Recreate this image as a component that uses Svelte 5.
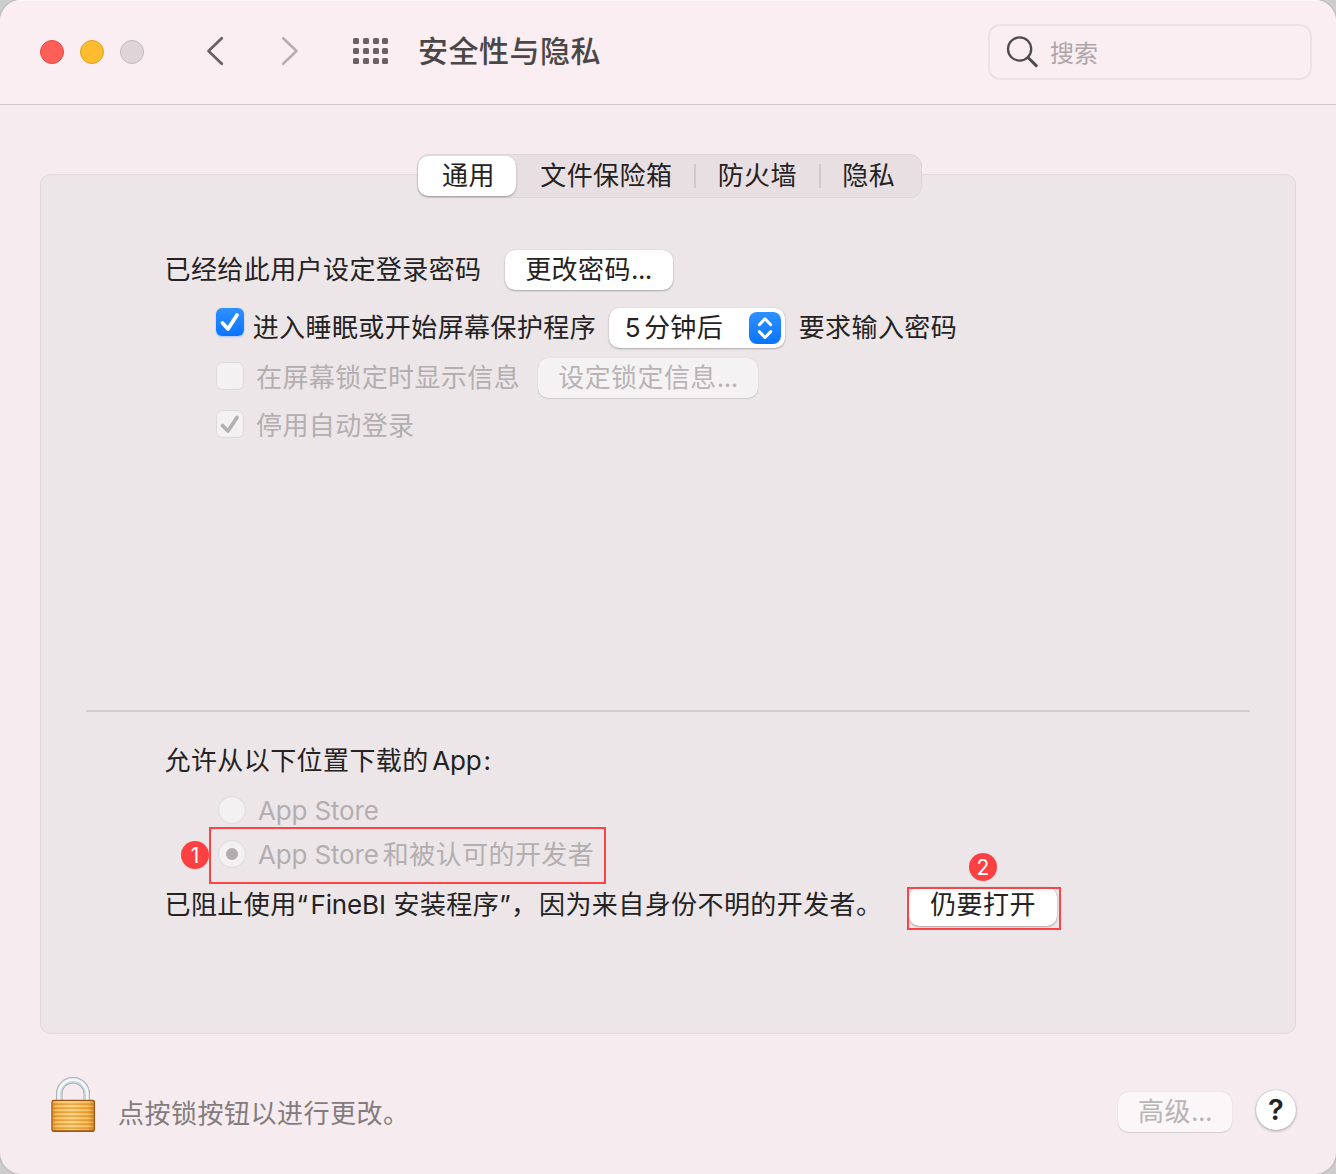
<script>
    const tabs = ["通用", "文件保险箱", "防火墙", "隐私"];
    const dots = [0, 1, 2, 3, 4, 5, 6, 7, 8, 9, 10, 11];
    let activeTab = $state("通用");
    let source = $state("identified");
</script>

<div class="window">
    <header class="toolbar">
        <div class="lights">
            <span class="light close"></span>
            <span class="light minimize"></span>
            <span class="light disabled"></span>
        </div>
        <svg class="back" width="20" height="30" viewBox="0 0 20 30" fill="none" stroke="#6b6064" stroke-width="2.7" stroke-linecap="round" stroke-linejoin="round"><path d="M16.8 2.3 3.5 15l13.3 12.7" /></svg>
        <svg class="forward" width="20" height="30" viewBox="0 0 20 30" fill="none" stroke="#b9aeb2" stroke-width="2.7" stroke-linecap="round" stroke-linejoin="round"><path d="M3.2 2.3 16.5 15 3.2 27.7" /></svg>
        <div class="grid">
            {#each dots as dot (dot)}
                <span></span>
            {/each}
        </div>
        <h1>安全性与隐私</h1>
        <div class="search">
            <svg width="34" height="34" viewBox="0 0 34 34" fill="none" stroke="#4f4b4d" stroke-linecap="round"><circle cx="13.6" cy="14" r="11.6" stroke-width="2.3" /><path d="M22 22.5 30.2 30.6" stroke-width="3" /></svg>
            <span>搜索</span>
        </div>
    </header>

    <main>
        <nav class="tabs">
            {#each tabs as tab}
                <button class="tab" class:active={activeTab === tab} onclick={() => activeTab = tab}><span>{tab}</span></button>
            {/each}
        </nav>

        <section class="panel">
            <div class="row password">
                <span class="text">已经给此用户设定登录密码</span>
                <button class="btn change"><span>更改密码<span class="dots">...</span></span></button>
            </div>
            <div class="row sleep">
                <span class="check on">
                    <svg width="28" height="28" viewBox="0 0 28 28" fill="none" stroke="#fff" stroke-width="3.8" stroke-linecap="round" stroke-linejoin="round"><path d="M6.5 15 12 21 21 7" /></svg>
                </span>
                <span class="text">进入睡眠或开始屏幕保护程序</span>
                <button class="btn select">
                    <span><span class="num">5</span>分钟后</span>
                    <span class="stepper">
                        <svg width="32" height="32" viewBox="0 0 32 32" fill="none" stroke="#fff" stroke-width="3" stroke-linecap="round" stroke-linejoin="round"><path d="m10.3 12.7 5.7-5.9 5.7 5.9M10.3 19.6l5.7 5.9 5.7-5.9" /></svg>
                    </span>
                </button>
                <span class="text">要求输入密码</span>
            </div>
            <div class="row message dim">
                <span class="check"></span>
                <span class="text">在屏幕锁定时显示信息</span>
                <button class="btn lock-message" disabled><span>设定锁定信息<span class="dots">...</span></span></button>
            </div>
            <div class="row auto dim">
                <span class="check">
                    <svg width="28" height="28" viewBox="0 0 28 28" fill="none" stroke="#b3b0b1" stroke-width="3.8" stroke-linecap="round" stroke-linejoin="round"><path d="M6.5 15.5 12 21 21 7.5" /></svg>
                </span>
                <span class="text">停用自动登录</span>
            </div>

            <hr />

            <div class="row allow">
                <span class="text">允许从以下位置下载的<span class="latin app">App</span><span class="colon">:</span></span>
            </div>
            <div class="row store dim">
                <span class="radio" class:selected={source === "store"}></span>
                <span class="text latin">App Store</span>
            </div>
            <div class="row identified dim">
                <span class="radio" class:selected={source === "identified"}></span>
                <span class="text"><span class="latin">App Store</span><span class="after-latin">和被认可的开发者</span></span>
                <span class="mark mark-source"></span>
                <span class="step step-one">1</span>
            </div>
            <div class="row blocked">
                <span class="text">已阻止使用<span class="quote">“</span><span class="latin">FineBI</span> 安装程序”，<span class="reason">因为来自身份不明的开发者。</span></span>
                <div class="open">
                    <button class="btn"><span>仍要打开</span></button>
                    <span class="mark mark-open"></span>
                    <span class="step step-two">2</span>
                </div>
            </div>
        </section>
    </main>

    <footer>
        <svg class="lock" width="46" height="58" viewBox="0 0 46 58">
            <defs>
                <linearGradient id="brass" x1="0" x2="1" y1="0" y2="0">
                    <stop offset="0" stop-color="#d98a20" />
                    <stop offset=".12" stop-color="#fbb440" />
                    <stop offset=".45" stop-color="#ffd27a" />
                    <stop offset=".85" stop-color="#f8ae3b" />
                    <stop offset="1" stop-color="#c97517" />
                </linearGradient>
            </defs>
            <path d="M9.2 25V18a13.8 13.8 0 0 1 27.6 0v7" fill="none" stroke="#96a1a6" stroke-width="6.4" />
            <path d="M9.2 25V18a13.8 13.8 0 0 1 27.6 0v7" fill="none" stroke="#cdd7dc" stroke-width="5.2" />
            <path d="M8.8 25V18a14.2 14.2 0 0 1 28.4 0v7" fill="none" stroke="#f4f8fa" stroke-width="2.6" />
            <rect x="1.9" y="24.4" width="42.6" height="31" rx="1.8" fill="url(#brass)" stroke="#9d5414" stroke-width="1.1" />
            <path d="M2.5 28.2h41M2.5 32.2h41M2.5 36.2h41M2.5 40.2h41M2.5 44.2h41M2.5 48.2h41M2.5 52.2h41" stroke="#d08628" stroke-width="1.3" opacity=".7" />
            <path d="M3 26.3h40M3 30.3h40M3 34.3h40M3 38.3h40M3 42.3h40M3 46.3h40M3 50.3h40" stroke="#ffdf98" stroke-width="1" opacity=".5" />
            <path d="M2.4 54.8h41.6" stroke="#a35c18" stroke-width="1.2" />
        </svg>
        <span class="text hint">点按锁按钮以进行更改。</span>
        <button class="btn advanced" disabled><span>高级<span class="dots">...</span></span></button>
        <button class="help"><span>?</span></button>
    </footer>
</div>

<style>
    :global(body) {
        background: #cfcccd;
    }

    .window {
        box-sizing: border-box;
        width: 1336px;
        height: 1174px;
        display: flex;
        flex-direction: column;
        border-radius: 21px;
        background: #f6ebef;
        box-shadow: 0 0 2px #888;
        overflow: hidden;
        font-family: Inter, "Noto Sans CJK SC", sans-serif;
        font-size: 26px;
        letter-spacing: 0.42px;
        line-height: 40px;
        color: #242223;
    }

    button {
        font: inherit;
        letter-spacing: inherit;
        color: inherit;
        border: none;
        padding: 0;
        white-space: nowrap;
    }

    .toolbar {
        box-sizing: border-box;
        height: 105px;
        display: flex;
        align-items: center;
        padding: 0 24px 2px 40px;
        background: #faeef2;
        border-top: 1px solid #fdf8fa;
        border-bottom: 1px solid #cfc5c8;
    }

    .lights {
        display: flex;
        gap: 16px;
    }

    .light {
        box-sizing: border-box;
        width: 24px;
        height: 24px;
        border-radius: 50%;
        border: 1px solid;
    }

    .close {
        background: #ff5f57;
        border-color: #e24640;
    }

    .minimize {
        background: #febc2e;
        border-color: #dfa023;
    }

    .disabled {
        background: #dfd5d9;
        border-color: #c4babe;
    }

    .back {
        margin: 0 0 2px 61px;
    }

    .forward {
        margin: 0 0 2px 55px;
    }

    .grid {
        display: grid;
        grid-template-columns: repeat(4, 6px);
        gap: 3.8px;
        margin: 0 0 1px 53px;
    }

    .grid span {
        width: 6px;
        height: 6px;
        border-radius: 1.5px;
        background: #6b6064;
    }

    h1 {
        margin: 0 0 2px 29.6px;
        font-size: 30px;
        font-weight: 500;
        letter-spacing: 0.5px;
        color: #4b4748;
    }

    .search {
        box-sizing: border-box;
        width: 324px;
        height: 56px;
        margin-left: auto;
        display: flex;
        align-items: center;
        padding-left: 16px;
        border: 2px solid #ece1e5;
        border-radius: 12px;
        font-size: 24px;
        letter-spacing: 0;
        color: #aea5a8;
    }

    .search span {
        margin: 4px 0 0 10px;
    }

    main {
        padding: 49px 40px 0;
    }

    .tabs {
        position: relative;
        box-sizing: border-box;
        width: 505px;
        height: 44px;
        margin: 0 auto -24px 377px;
        display: flex;
        align-items: center;
        border: 1px solid #ddd5d8;
        border-radius: 12px;
        background: #e8dfe2;
    }

    .tab {
        height: 40px;
        padding: 0 22.7px;
        border-radius: 10px;
        background: none;
        position: relative;
    }

    .tab span {
        display: block;
        margin-top: -1px;
    }

    .tab.active {
        padding: 0 21.5px 0 24px;
        margin-right: 1.2px;
        background: #fff;
        box-shadow: 0 1px 2px rgba(0, 0, 0, 0.35);
    }

    .tab:not(.active) + .tab::before {
        content: "";
        position: absolute;
        left: -1px;
        top: 8px;
        width: 2px;
        height: 24px;
        background: #d1c8cb;
    }

    .panel {
        box-sizing: border-box;
        height: 860px;
        padding-top: 75px;
        border: 1px solid #e0d9dc;
        border-radius: 10px;
        background: #ece6e8;
    }

    .row {
        height: 40px;
        display: flex;
        align-items: center;
        position: relative;
        white-space: nowrap;
    }

    .row .text {
        padding-bottom: 1px;
    }

    .dim {
        color: #b3aeb0;
    }

    .btn {
        height: 40px;
        display: flex;
        align-items: center;
        justify-content: center;
        border-radius: 10px;
        background: #fff;
        box-shadow: 0 0 1px rgba(0, 0, 0, 0.25), 0 1px 2px rgba(0, 0, 0, 0.25);
    }

    .btn > span:first-child {
        padding-bottom: 1px;
    }

    .btn:disabled {
        color: #b8b4b6;
        background: #f5f2f3;
        box-shadow: 0 0 1px rgba(0, 0, 0, 0.2), 0 1px 1px rgba(0, 0, 0, 0.1);
    }

    .dots {
        letter-spacing: -0.5px;
    }

    .password,
    .allow,
    .blocked {
        padding-left: 123.5px;
    }

    .change {
        width: 168px;
        margin-left: 23px;
    }

    .sleep {
        margin-top: 18px;
        padding-left: 175px;
    }

    .message {
        margin-top: 10px;
        padding-left: 175px;
    }

    .auto {
        margin-top: 8px;
        padding-left: 175px;
    }

    .check {
        box-sizing: border-box;
        width: 28px;
        height: 28px;
        margin-right: 12px;
        border-radius: 6px;
        background: #f4f1f2;
        box-shadow: inset 0 0 1px 1px #ddd8da;
    }

    .check svg {
        display: block;
    }

    .check.on {
        margin: 0 8.7px 12px 0;
        background: linear-gradient(#2f90ff, #0a74ff);
        box-shadow: 0 1px 2px rgba(10, 110, 255, 0.3);
    }

    .message .check,
    .auto .check {
        margin-bottom: 4px;
    }

    .select {
        width: 176px;
        margin: 0 13.5px 0 13px;
        padding: 0 4px 0 15.5px;
        justify-content: space-between;
    }

    .num {
        margin-right: 3px;
    }

    .stepper {
        width: 32px;
        height: 32px;
        border-radius: 8px;
        background: linear-gradient(#2f90ff, #0a74ff);
    }

    .stepper svg {
        display: block;
    }

    .lock-message {
        width: 220px;
        margin-left: 17.8px;
    }

    hr {
        height: 2px;
        margin: 264px 45px 29px;
        border: none;
        background: #d3cdcf;
    }

    .latin {
        letter-spacing: -0.15px;
    }

    .app {
        margin-left: 3.5px;
    }

    .colon {
        margin-left: 2px;
    }

    .allow .text,
    .store .text {
        padding-bottom: 0;
    }

    .store {
        margin-top: 10px;
        padding-left: 177px;
    }

    .identified {
        margin-top: 4px;
        padding-left: 177px;
    }

    .identified .text {
        padding-bottom: 0;
    }

    .radio {
        box-sizing: border-box;
        width: 28px;
        height: 28px;
        margin: 0 12px 2px 0;
        display: flex;
        align-items: center;
        justify-content: center;
        border-radius: 50%;
        background: #f4f1f2;
        box-shadow: inset 0 0 1px 1px #ddd8da;
    }

    .radio.selected::after {
        content: "";
        width: 12px;
        height: 12px;
        border-radius: 50%;
        background: #b1adaf;
    }

    .after-latin {
        margin-left: 4px;
    }

    .blocked {
        margin-top: 12px;
        align-items: flex-start;
    }

    .blocked .text {
        width: 744.5px;
        margin-top: -2px;
        padding-bottom: 0;
    }

    .blocked .btn span {
        padding-bottom: 3px;
    }

    .quote {
        margin-right: 2px;
    }

    .reason {
        margin-left: 1.5px;
    }

    .open {
        position: relative;
    }

    .open .btn {
        width: 148px;
        height: 39px;
    }

    .mark {
        position: absolute;
        box-sizing: border-box;
        border: 2px solid #fc4345;
    }

    .mark-source {
        left: 168px;
        top: -8px;
        width: 397px;
        height: 57px;
    }

    .mark-open {
        left: -2px;
        top: 0;
        width: 154px;
        height: 43px;
    }

    .step {
        position: absolute;
        width: 28px;
        height: 28px;
        border-radius: 50%;
        background: #fd4042;
        color: #fff;
        font-size: 21px;
        letter-spacing: 0;
        line-height: 29px;
        text-align: center;
    }

    .step-one {
        left: 140px;
        top: 6px;
    }

    .step-two {
        left: 60px;
        top: -34px;
    }

    footer {
        display: flex;
        align-items: center;
        height: 60px;
        margin-top: 41px;
        padding: 0 40px 0 50px;
    }

    .hint {
        margin: 17px 0 0 22px;
        letter-spacing: 0.5px;
        color: #827c7e;
    }

    .advanced {
        width: 114px;
        margin: 14px 0 0 auto;
    }

    .advanced:disabled {
        background: #fbf7f8;
    }

    .help {
        width: 40px;
        height: 40px;
        margin: 10px 0 0 24px;
        border-radius: 50%;
        background: #fff;
        box-shadow: 0 0 1px rgba(0, 0, 0, 0.3), 0 1px 3px rgba(0, 0, 0, 0.3);
        font-size: 29px;
        font-weight: 600;
        letter-spacing: 0;
    }
</style>
